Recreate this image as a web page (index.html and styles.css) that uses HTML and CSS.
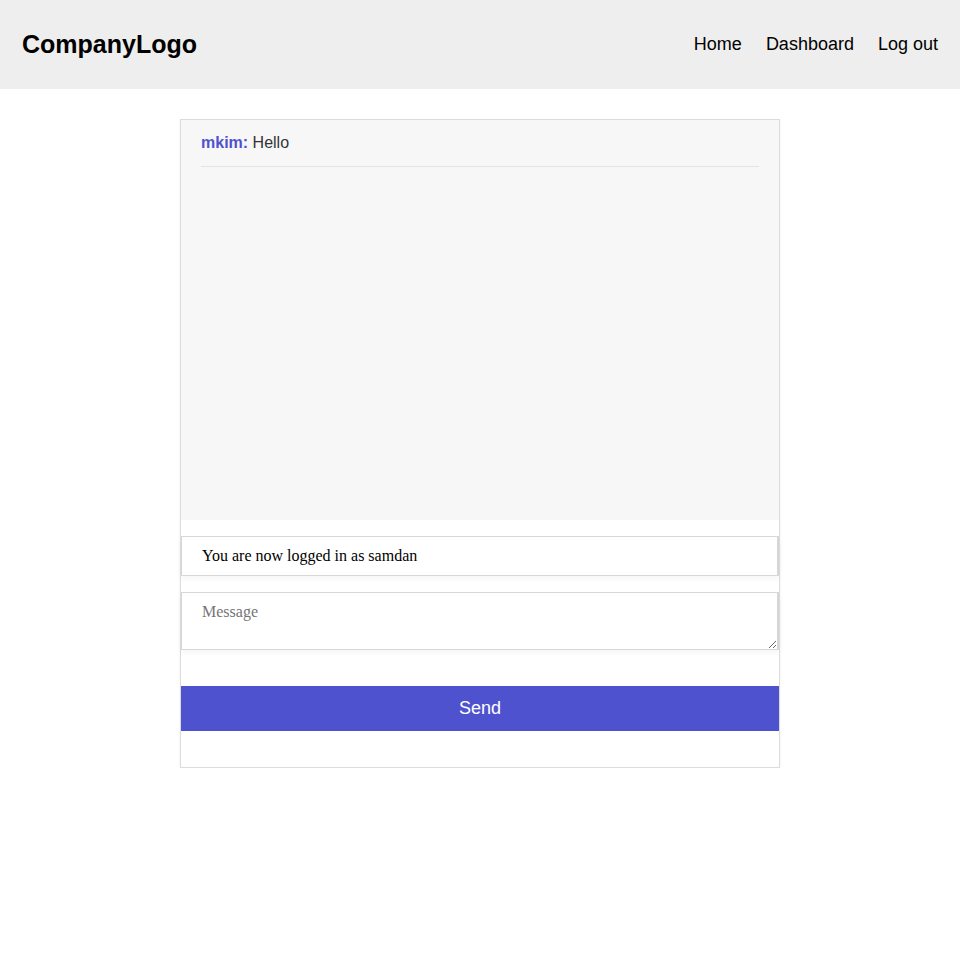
FILE: index.html
```html
<!DOCTYPE html>
<html>
<head>
<meta charset="utf-8">
<link rel="stylesheet" href="styles.css">
</head>
<body>
<header class="topbar">
  <div class="logo">CompanyLogo</div>
  <nav class="nav">
    <a href="#">Home</a>
    <a href="#">Dashboard</a>
    <a href="#">Log out</a>
  </nav>
</header>
<main class="main">
  <section class="card">
    <div class="messages">
      <div class="msg"><span class="user">mkim:</span> Hello</div>
    </div>
    <input class="status" type="text" value="You are now logged in as samdan">
    <textarea class="message" placeholder="Message"></textarea>
    <button class="send">Send</button>
  </section>
</main>
</body>
</html>
```
FILE: styles.css
```css
* { box-sizing: border-box; }
body {
  margin: 0;
  font-family: "Liberation Sans", Arial, sans-serif;
  background: #fff;
}
.topbar {
  height: 89px;
  background: #eeeeee;
  display: flex;
  align-items: center;
  justify-content: space-between;
  padding: 0 22px;
}
.logo {
  font-size: 25px;
  font-weight: bold;
  color: #000;
}
.nav {
  display: flex;
  gap: 24px;
}
.nav a {
  font-size: 18px;
  color: #000;
  text-decoration: none;
}
.main {
  display: flex;
  justify-content: center;
  padding-top: 30px;
}
.card {
  width: 600px;
  border: 1px solid #dcdcdc;
  box-shadow: 0 1px 3px rgba(0,0,0,0.06);
  display: flex;
  flex-direction: column;
  padding-bottom: 36px;
}
.messages {
  height: 400px;
  background: #f7f7f7;
  padding: 0 20px;
}
.msg {
  font-size: 16px;
  color: #333;
  padding: 13px 0 14px;
  line-height: 19px;
  border-bottom: 1px solid #e4e4e4;
}
.user {
  color: #4f52cf;
  font-weight: bold;
}
.status {
  margin-top: 16px;
  height: 40px;
  width: 100%;
  border: 1px solid #d8d8d8;
  border-right: 2px solid #d6d6d6;
  box-shadow: 0 3px 6px rgba(0,0,0,0.04);
  padding: 0 20px;
  font-family: "Liberation Serif", "Times New Roman", serif;
  font-size: 16px;
  color: #000;
  outline: none;
}
.message {
  margin-top: 16px;
  height: 58px;
  width: 100%;
  border: 1px solid #d8d8d8;
  border-right: 2px solid #d6d6d6;
  box-shadow: 0 3px 6px rgba(0,0,0,0.04);
  padding: 10px 20px;
  font-family: "Liberation Serif", "Times New Roman", serif;
  font-size: 16px;
  display: block;
  outline: none;
}
.message::placeholder { color: #757575; }
.send {
  margin-top: 36px;
  height: 45px;
  width: 100%;
  border: none;
  background: #4f52cf;
  color: #fff;
  font-family: "Liberation Sans", Arial, sans-serif;
  font-size: 18px;
}
```
